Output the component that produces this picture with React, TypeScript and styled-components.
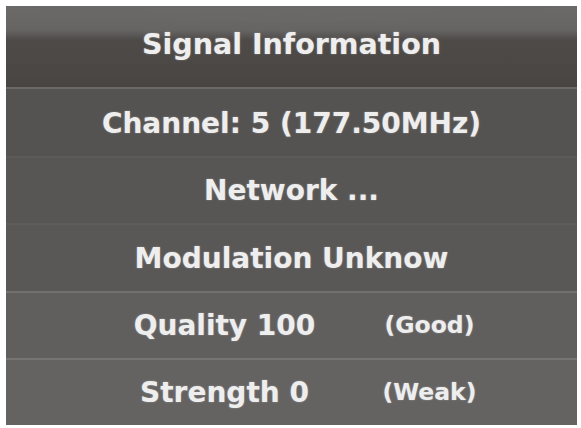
import React from "react";
import styled, { createGlobalStyle } from "styled-components";

const GlobalStyle = createGlobalStyle`
  html, body {
    margin: 0;
    padding: 0;
    background: #ffffff;
  }
  body {
    font-family: "DejaVu Sans", Verdana, sans-serif;
  }
`;

const Screen = styled.div`
  width: 581px;
  height: 428px;
  padding: 6px 4px 3px 6px;
  box-sizing: border-box;
  display: flex;
`;

const Panel = styled.section`
  flex: 1;
  display: flex;
  flex-direction: column;
  background: #575553;
  overflow: hidden;
`;

const Header = styled.header`
  height: 83px;
  display: flex;
  align-items: center;
  justify-content: center;
  padding-bottom: 5px;
  box-sizing: border-box;
  background:
    radial-gradient(ellipse 75% 62% at 50% -30%, #6f6d6c 0%, #6a6867 78%, rgba(106, 104, 103, 0) 82%),
    linear-gradient(#6c6a69 0px, #676564 24px, #4d4a48 34px, #4a4745 70px, #464341 83px);
  border-bottom: 2px solid #6b6968;
`;

const Title = styled.h1`
  margin: 0;
  font-size: 28.5px;
  font-weight: 700;
  color: #eeeeee;
  text-shadow: 0 0 2px rgba(255, 255, 255, 0.35);
`;

const Row = styled.div<{ $tone: string; $line: string }>`
  flex: 1;
  display: flex;
  align-items: center;
  justify-content: center;
  background: ${(p) => p.$tone};
  border-top: 2px solid ${(p) => p.$line};
  &:first-of-type {
    border-top: none;
    padding-top: 2px;
  }
`;

const SplitRow = styled(Row)`
  display: grid;
  grid-template-columns: 1fr 1fr;
  padding: 0 45px 0 116px;
`;

const Text = styled.span`
  font-size: 28px;
  font-weight: 700;
  color: #eeeeee;
  text-align: center;
  white-space: pre;
  text-shadow: 0 0 2px rgba(255, 255, 255, 0.35);
`;

const Status = styled(Text)`
  font-size: 23.5px;
`;

type Reading = { label: string; status?: string; tone: string; line: string };

const readings: Reading[] = [
  { label: "Channel: 5 (177.50MHz)", tone: "#555351", line: "#585654" },
  { label: "Network ...", tone: "#585654", line: "#5d5b59" },
  { label: "Modulation Unknow", tone: "#5a5857", line: "#5f5d5c" },
  { label: "Quality 100", status: "(Good)", tone: "#605f5e", line: "#727170" },
  { label: "Strength 0", status: "(Weak)", tone: "#646362", line: "#767574" },
];

export default function App() {
  return (
    <>
      <GlobalStyle />
      <Screen>
        <Panel>
          <Header>
            <Title>Signal Information</Title>
          </Header>
          {readings.map((r) =>
            r.status ? (
              <SplitRow key={r.label} $tone={r.tone} $line={r.line}>
                <Text>{r.label}</Text>
                <Status>{r.status}</Status>
              </SplitRow>
            ) : (
              <Row key={r.label} $tone={r.tone} $line={r.line}>
                <Text>{r.label}</Text>
              </Row>
            )
          )}
        </Panel>
      </Screen>
    </>
  );
}
